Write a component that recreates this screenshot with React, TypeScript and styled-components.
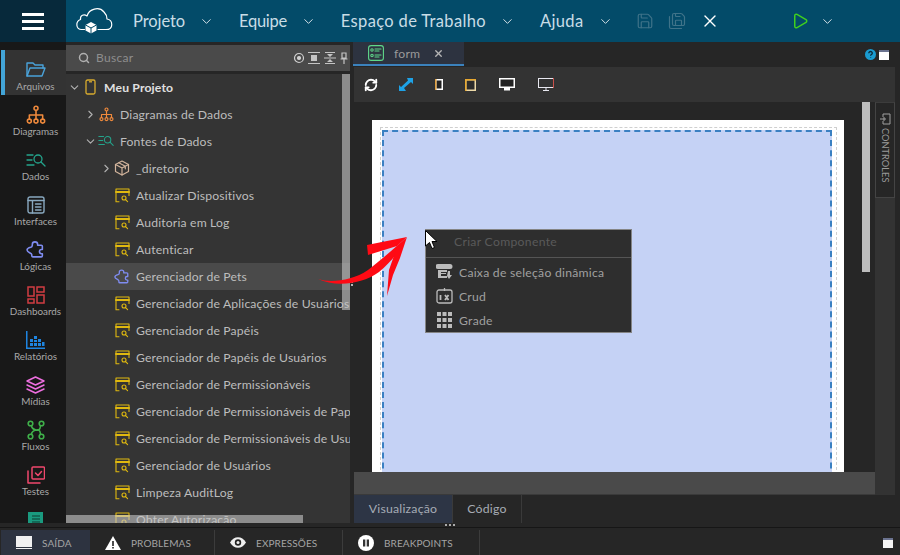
import React from 'react'
import styled, { createGlobalStyle } from 'styled-components'
import { ChevronDown, ChevronRight, Search, Save, SaveAll, X, Play, RefreshCw } from 'lucide-react'

const Global = createGlobalStyle`
  html, body { margin: 0; padding: 0; background: #262626; }
  * { box-sizing: border-box; }
  body { font-family: "Lato", "Liberation Sans", sans-serif; }
`

const Shell = styled.div`
  position: relative;
  width: 900px;
  height: 555px;
  display: flex;
  flex-direction: column;
  overflow: hidden;
  background: #262626;
`

/* header */
const Header = styled.header`
  height: 42px;
  flex: none;
  display: flex;
  align-items: center;
  background: #034b69;
  color: #c9dde6;
`
const BurgerBox = styled.div`
  width: 66px;
  height: 42px;
  background: #07293b;
  display: flex;
  flex-direction: column;
  align-items: center;
  justify-content: center;
  gap: 4px;
  span {
    display: block;
    width: 22px;
    height: 3px;
    background: #fff;
  }
`
const Logo = styled.svg`
  margin-left: 9px;
  width: 38px;
  height: 30px;
  flex: none;
`
const NavList = styled.nav`
  display: flex;
  align-items: center;
  margin-left: 20px;
  gap: 25px;
`
const NavItem = styled.div<{ $track: number }>`
  display: flex;
  align-items: center;
  gap: 14px;
  font-size: 16.5px;
  letter-spacing: ${p => p.$track}px;
`
const HeaderTools = styled.div`
  display: flex;
  align-items: center;
  margin-left: 23px;
  gap: 14px;
  color: #3f7389;
`
const CloseTool = styled.span`
  display: flex;
  color: #fff;
`
const RunTools = styled.div`
  display: flex;
  align-items: center;
  margin-left: 71px;
  gap: 11px;
  color: #3fcf1f;
`

/* body */
const Workspace = styled.div`
  height: 481px;
  flex: none;
  display: flex;
`
const Sidebar = styled.aside`
  width: 66px;
  flex: none;
  background: #181818;
  padding-top: 8px;
  overflow: hidden;
`
const SideItem = styled.div<{ $active?: boolean }>`
  height: 45px;
  margin-left: 1px;
  display: flex;
  flex-direction: column;
  align-items: center;
  padding-top: 9px;
  font-size: 9.9px;
  color: #a8a8a8;
  background: ${p => (p.$active ? '#333' : 'transparent')};
  border-left: 4px solid ${p => (p.$active ? '#43a5d8' : 'transparent')};
`
const SideIconSlot = styled.span`
  height: 21px;
  flex: none;
  display: flex;
  align-items: center;
  justify-content: center;
`
const FilesPanel = styled.section`
  position: relative;
  width: 284px;
  flex: none;
  display: flex;
  flex-direction: column;
  background: #262626;
  overflow: hidden;
`
const SearchBar = styled.div`
  margin-top: 3px;
  height: 26px;
  flex: none;
  display: flex;
  align-items: center;
  padding: 0 1px 1px 12px;
  background: #4a4a4a;
  color: #8e8e8e;
  font-size: 12px;
  letter-spacing: 0.3px;
  gap: 6px;
`
const SearchLabel = styled.span`
  flex: 1;
`
const PanelTools = styled.div`
  display: flex;
  align-items: center;
  gap: 3.5px;
  svg { display: block; }
`
const Tree = styled.div`
  margin-top: 3px;
  flex: 1;
  background: #343434;
  overflow: hidden;
`
const Row = styled.div<{ $level: number; $selected?: boolean; $strong?: boolean }>`
  height: 27px;
  display: flex;
  align-items: center;
  white-space: nowrap;
  padding-left: ${p => p.$level * 16}px;
  padding-bottom: 1px;
  font-size: 12.2px;
  letter-spacing: 0.16px;
  color: ${p => (p.$strong ? '#e0e0e0' : '#bdbdbd')};
  font-weight: ${p => (p.$strong ? 700 : 400)};
  background: ${p => (p.$selected ? '#4a4a4a' : 'transparent')};
`
const Caret = styled.span`
  width: 16px;
  flex: none;
  display: flex;
  justify-content: center;
  color: #b0b0b0;
`
const RowIcon = styled.span`
  width: 16px;
  flex: none;
  margin-right: 6px;
  display: flex;
  justify-content: center;
`
const VScroll = styled.div`
  position: absolute;
  right: 0;
  top: 32px;
  width: 8px;
  height: 236px;
  background: rgba(200, 200, 200, 0.6);
`
const HScroll = styled.div`
  position: absolute;
  left: 0;
  bottom: 0;
  width: 237px;
  height: 8px;
  background: rgba(200, 200, 200, 0.6);
`
const Gutter = styled.div`
  width: 3px;
  flex: none;
  display: flex;
  flex-direction: column;
  align-items: center;
  justify-content: center;
  gap: 1px;
  span {
    width: 2px;
    height: 1.5px;
    background: #b5b5b5;
  }
`

/* main */
const Main = styled.main`
  flex: 1;
  display: flex;
  flex-direction: column;
  min-width: 0;
`
const TabStrip = styled.div`
  height: 25px;
  flex: none;
  display: flex;
  align-items: flex-start;
  justify-content: space-between;
  padding-right: 11px;
`
const FormTab = styled.div`
  width: 111px;
  height: 24px;
  display: flex;
  align-items: center;
  padding-left: 15px;
  background: #2d3340;
  border-bottom: 2px solid #3b82bd;
  color: #9a9a9a;
  font-size: 12.2px;
  letter-spacing: 0.2px;
`
const TabTitle = styled.span`
  margin-left: 10px;
  flex: none;
  width: 33px;
`
const TabClose = styled.span`
  margin-left: 6px;
  display: flex;
  color: #b5b5b5;
`
const WindowTools = styled.div`
  display: flex;
  align-items: center;
  gap: 3px;
  padding-top: 7px;
`
const Toolbar = styled.div`
  height: 35px;
  flex: none;
  margin-left: 1px;
  margin-right: 5px;
  background: #333;
  display: flex;
  align-items: center;
`
const ToolButton = styled.span<{ $w: number }>`
  width: ${p => p.$w}px;
  flex: none;
  display: flex;
  justify-content: center;
`
const Stage = styled.div`
  height: 393px;
  flex: none;
  display: flex;
  margin-right: 5px;
`
const StageLeft = styled.div`
  flex: 1;
  display: flex;
  flex-direction: column;
  min-width: 0;
`
const Canvas = styled.div`
  position: relative;
  height: 370px;
  flex: none;
  padding: 18px 0 0 19px;
  overflow: hidden;
  background: #262626;
`
const CanvasScroll = styled.div`
  position: absolute;
  right: 5px;
  top: 0;
  width: 8px;
  height: 170px;
  background: #bdbdbd;
`
const Page = styled.div`
  position: relative;
  width: 472px;
  height: 420px;
  background: #fff;
  padding: 7px 7px 0 8px;
`
const GuideOuter = styled.div`
  height: 100%;
  border: 1px dashed #cfcfcf;
  padding: 2px 4px 0 1px;
`
const GuideInner = styled.div`
  height: 100%;
  border: 2px dashed #3a80c2;
  background: #c5d2f5;
`
const ContextMenu = styled.div`
  position: absolute;
  left: 53px;
  top: 109px;
  width: 207px;
  height: 104px;
  background: #2e2e2e;
  border: 1px solid #858585;
`
const MenuTitle = styled.div`
  height: 28px;
  display: flex;
  align-items: center;
  padding: 0 0 5px 28px;
  color: #5a5a5a;
  font-size: 12.2px;
  letter-spacing: 0.3px;
  border-bottom: 1px solid #555;
`
const MenuList = styled.div`
  padding-top: 2px;
`
const MenuRow = styled.div`
  height: 24px;
  display: flex;
  align-items: center;
  gap: 6px;
  padding-left: 10px;
  color: #a0a0a0;
  font-size: 12.2px;
  letter-spacing: 0.25px;
`
const BottomFiller = styled.div`
  height: 23px;
  flex: none;
  background: #4a4a4a;
  border-bottom: 1px solid #3a3a3a;
  margin-left: 1px;
`
const ControlsColumn = styled.div`
  width: 20px;
  flex: none;
  background: #333;
`
const ControlsTab = styled.div`
  height: 96px;
  border: 1px solid #444;
  border-top-color: #3c3c3c;
  background: #262626;
  display: flex;
  flex-direction: column;
  align-items: center;
  padding-top: 10px;
  gap: 3px;
  color: #9a9a9a;
`
const ControlsLabel = styled.span`
  writing-mode: vertical-rl;
  font-size: 9.3px;
  letter-spacing: 0;
`
const ViewTabs = styled.div`
  height: 28px;
  flex: none;
  display: flex;
  margin-left: 1px;
`
const ViewTab = styled.div<{ $active?: boolean; $w: number }>`
  width: ${p => p.$w}px;
  height: 28px;
  padding-bottom: 1px;
  display: flex;
  align-items: center;
  justify-content: center;
  font-size: 12.3px;
  letter-spacing: 0.2px;
  color: #a6acb5;
  background: ${p => (p.$active ? '#2d3545' : 'transparent')};
  border-right: 1px solid #3a3a3a;
`

/* footer */
const Splitter = styled.div`
  height: 5px;
  flex: none;
  display: flex;
  align-items: flex-start;
  justify-content: center;
  padding-top: 1px;
  border-bottom: 1px solid #161616;
`
const SplitterDots = styled.div`
  display: flex;
  gap: 2px;
  span {
    width: 2px;
    height: 2px;
    background: #aaa;
  }
`
const Footer = styled.footer`
  flex: 1;
  display: flex;
  align-items: flex-end;
  padding: 2px 7px 0 1px;
  background: #262626;
`
const FootTab = styled.div<{ $active?: boolean; $w: number }>`
  width: ${p => p.$w}px;
  height: 25px;
  flex: none;
  display: flex;
  align-items: center;
  gap: 10px;
  padding-left: 15px;
  font-size: 10px;
  letter-spacing: 0.1px;
  color: #a4a4a4;
  background: ${p => (p.$active ? '#2d3340' : 'transparent')};
  border-right: ${p => (p.$active ? 'none' : '1px solid #3c3c3c')};
`
const FootEnd = styled.div`
  margin-left: auto;
  align-self: center;
  display: flex;
`

/* overlay */
const ArrowOverlay = styled.svg`
  position: absolute;
  left: 310px;
  top: 230px;
  width: 105px;
  height: 70px;
  pointer-events: none;
`
const CursorOverlay = styled.svg`
  position: absolute;
  left: 425px;
  top: 230px;
  width: 13px;
  height: 20px;
`

const line = { fill: 'none', strokeLinecap: 'round', strokeLinejoin: 'round' } as const

const GridTableIcon = () => (
  <svg width="15" height="15" viewBox="0 0 15 15" {...line} stroke="#e0b90f" strokeWidth="1.100">
    <path d="M4 13.800H1V1h13v6.500" />
    <path d="M1 4h13" strokeWidth="2" />
    <circle cx="9" cy="10" r="2" />
    <path d="M10.600 11.600 12.600 13.600" />
  </svg>
)
const PuzzleIcon = ({ size = 17, color = '#7f8cf0' }: { size?: number; color?: string }) => (
  <svg width={size} height={size} viewBox="0 0 18 18" {...line} stroke={color} strokeWidth="1.500">
    <path d="M6 5V4c0-3 5-3 5 0v1h3.500a1 1 0 0 1 1 1v3h-.8c-2.600 0-2.600 4 0 4h.8v2a1 1 0 0 1-1 1H6.500a1 1 0 0 1-1-.8V14c0-2-4.500-2-4.500-4.500S5.500 7 5.500 6.500Z" />
  </svg>
)
const DiagramIcon = ({ size = 18 }: { size?: number }) => (
  <svg width={size} height={size} viewBox="0 0 18 18" {...line} stroke="#f08a3c" strokeWidth="1.400">
    <circle cx="9" cy="3" r="1.800" />
    <circle cx="3" cy="14.500" r="1.800" />
    <circle cx="9" cy="14.500" r="1.800" />
    <circle cx="15" cy="14.500" r="1.800" />
    <path d="M9 5v7.500M3 12.500V9h12v3.500" />
  </svg>
)
const DataIcon = ({ size = 20 }: { size?: number }) => (
  <svg width={size} height={size * 0.7} viewBox="0 0 20 14" {...line} stroke="#24a48c" strokeWidth="1.300">
    <path d="M1 2h6M1 7h5M1 12h7" />
    <circle cx="12" cy="6" r="4" />
    <path d="M15 9l4 4" />
  </svg>
)
const FolderIcon = () => (
  <svg width="20" height="18" viewBox="0 0 20 18" {...line} stroke="#4aa3da" strokeWidth="1.400">
    <path d="M1 15V2h6l2 2h8v3" />
    <path d="M1 15 4 7h15l-3 8Z" />
  </svg>
)
const InterfaceIcon = () => (
  <svg width="18" height="18" viewBox="0 0 18 18" {...line} stroke="#88a8bf" strokeWidth="1.400">
    <rect x="1" y="1" width="16" height="16" rx="2" />
    <path d="M1 4.500h16M5.500 4.500V17M8.500 8h5.500M8.500 11h5.500M8.500 14h5.500" />
  </svg>
)
const DashIcon = () => (
  <svg width="18" height="18" viewBox="0 0 18 18" fill="none" stroke="#d13c42" strokeWidth="1.500">
    <rect x="1" y="1" width="6" height="9" />
    <rect x="10" y="1" width="7" height="5" />
    <rect x="1" y="13" width="6" height="4" />
    <rect x="10" y="9" width="7" height="8" />
  </svg>
)
const ReportIcon = () => (
  <svg width="19" height="18" viewBox="0 0 19 18" fill="#1e84e0">
    <path d="M0 0h1.500v16.500H19V18H0Z" />
    <path d="M4 8h3v3H4ZM4 12h3v3H4ZM8 5h3v3H8ZM8 9h3v2H8ZM8 12h3v3H8ZM12 8h3v3h-3ZM12 12h3v3h-3ZM16 11h2.500v4H16Z" />
  </svg>
)
const MediaIcon = () => (
  <svg width="19" height="18" viewBox="0 0 19 18" {...line} stroke="#ee6fe0" strokeWidth="1.500">
    <path d="M9.500 1 18 5l-8.500 4L1 5Z" />
    <path d="m1 9 8.500 4L18 9" />
    <path d="m1 13 8.500 4 8.500-4" />
  </svg>
)
const FlowIcon = () => (
  <svg width="18" height="20" viewBox="0 0 18 20" {...line} stroke="#3fb04a" strokeWidth="1.600">
    <circle cx="3.500" cy="3.500" r="2.300" />
    <circle cx="14.500" cy="3.500" r="2.300" />
    <circle cx="3.500" cy="16.500" r="2.300" />
    <circle cx="14.500" cy="16.500" r="2.300" />
    <path d="M4.500 6C5 9 7 9.500 9 10s4 1 4.500-4M4.500 14C5 11 7 10.500 9 10s4-1 4.500 4" />
  </svg>
)
const TestIcon = () => (
  <svg width="18" height="18" viewBox="0 0 18 18" {...line} stroke="#f0476c" strokeWidth="1.500">
    <rect x="5" y="1" width="12.500" height="12" rx="1" />
    <path d="M1 5v12h12" />
    <path d="m8.500 7 2.500 2.500 3.500-4" />
  </svg>
)
const LastIcon = () => (
  <svg width="17" height="18" viewBox="0 0 17 18" fill="#1a9a7f">
    <path d="M1 1h15v16H1Z" />
    <path d="M5 5h8M5 8h8M5 11h8" stroke="#0d3a30" strokeWidth="1.200" />
  </svg>
)

type Side = { label: string; icon: React.ReactNode; active?: boolean }
const sideItems: Side[] = [
  { label: 'Arquivos', icon: <FolderIcon />, active: true },
  { label: 'Diagramas', icon: <DiagramIcon size={20} /> },
  { label: 'Dados', icon: <DataIcon /> },
  { label: 'Interfaces', icon: <InterfaceIcon /> },
  { label: 'Lógicas', icon: <PuzzleIcon size={19} /> },
  { label: 'Dashboards', icon: <DashIcon /> },
  { label: 'Relatórios', icon: <ReportIcon /> },
  { label: 'Mídias', icon: <MediaIcon /> },
  { label: 'Fluxos', icon: <FlowIcon /> },
  { label: 'Testes', icon: <TestIcon /> },
  { label: '', icon: <LastIcon /> },
]

const navItems = [
  { label: 'Projeto', track: -0.08 },
  { label: 'Equipe', track: -0.3 },
  { label: 'Espaço de Trabalho', track: 0.35 },
  { label: 'Ajuda', track: 0.35 },
]

const sources = [
  'Atualizar Dispositivos',
  'Auditoria em Log',
  'Autenticar',
  'Gerenciador de Pets',
  'Gerenciador de Aplicações de Usuários',
  'Gerenciador de Papéis',
  'Gerenciador de Papéis de Usuários',
  'Gerenciador de Permissionáveis',
  'Gerenciador de Permissionáveis de Papéis',
  'Gerenciador de Permissionáveis de Usuários',
  'Gerenciador de Usuários',
  'Limpeza AuditLog',
  'Obter Autorização',
]

const App = () => {
  return (
    <Shell>
      <Global />
      <Header>
        <BurgerBox>
          <span />
          <span />
          <span />
        </BurgerBox>
        <Logo viewBox="0 0 38 30" {...line} stroke="#fff" strokeWidth="1.200">
          <path d="M9.500 23.500H6.500C1 23.500 0 15.500 5.500 13.500 5 9 9 8 12 10 14 3 24 0 29 6c2.500 2.500 3 5 3 7 6 1 7 10.500-1 10.500h-8" />
          <path d="M16 16l5.500 3v5.500L16 27.500l-5.500-3V19Z" fill="#fff" stroke="none" />
          <path d="M10.500 19 16 22l5.500-3M16 22v5.500" stroke="#034b69" strokeWidth="1" />
        </Logo>
        <NavList>
          {navItems.map(item => (
            <NavItem key={item.label} $track={item.track}>
              {item.label}
              <ChevronDown size={15} strokeWidth={1.500} color="#dfe9ee" />
            </NavItem>
          ))}
        </NavList>
        <HeaderTools>
          <Save size={18} strokeWidth={1.600} />
          <SaveAll size={18} strokeWidth={1.600} />
          <CloseTool>
            <X size={20} strokeWidth={1.600} />
          </CloseTool>
        </HeaderTools>
        <RunTools>
          <Play size={18} strokeWidth={2} />
          <ChevronDown size={15} strokeWidth={1.500} color="#dfe9ee" />
        </RunTools>
      </Header>

      <Workspace>
        <Sidebar>
          {sideItems.map(item => (
            <SideItem key={item.label} $active={item.active}>
              <SideIconSlot>{item.icon}</SideIconSlot>
              {item.label}
            </SideItem>
          ))}
        </Sidebar>

        <FilesPanel>
          <SearchBar>
            <Search size={12} strokeWidth={3} color="#b0b0b0" />
            <SearchLabel>Buscar</SearchLabel>
            <PanelTools>
              <svg width="12" height="12" viewBox="0 0 12 12" fill="none" stroke="#d0d0d0" strokeWidth="1.200">
                <circle cx="6" cy="6" r="4.500" />
                <circle cx="6" cy="6" r="1.500" fill="#d0d0d0" />
              </svg>
              <svg width="12" height="12" viewBox="0 0 12 12" fill="#c4c4c4">
                <path d="M0 0h12v1H0ZM0 11h12v1H0ZM3 3h6v6H3Z" />
              </svg>
              <svg width="12" height="12" viewBox="0 0 12 12" fill="#c4c4c4">
                <path d="M1 0h10v1H1ZM0 5.500h12v1H0ZM1 11h10v1H1ZM3 2h6L6 5ZM3 10h6L6 7Z" />
              </svg>
              <svg width="10" height="12" viewBox="0 0 10 12" fill="none" stroke="#c4c4c4" strokeWidth="1.200">
                <path d="M3 1h4v5H3ZM1.500 7h7M5 7v5" />
              </svg>
            </PanelTools>
          </SearchBar>
          <Tree>
            <Row $level={0} $strong>
              <Caret>
                <ChevronDown size={13} strokeWidth={2} />
              </Caret>
              <RowIcon>
                <svg width="11" height="16" viewBox="0 0 11 16" fill="none" stroke="#d8ab2e" strokeWidth="1.300">
                  <rect x="1" y="1" width="9" height="14" rx="1.500" />
                  <path d="M4 2.800h3" />
                </svg>
              </RowIcon>
              Meu Projeto
            </Row>
            <Row $level={1}>
              <Caret>
                <ChevronRight size={13} strokeWidth={2} />
              </Caret>
              <RowIcon>
                <DiagramIcon size={15} />
              </RowIcon>
              Diagramas de Dados
            </Row>
            <Row $level={1}>
              <Caret>
                <ChevronDown size={13} strokeWidth={2} />
              </Caret>
              <RowIcon>
                <DataIcon size={16} />
              </RowIcon>
              Fontes de Dados
            </Row>
            <Row $level={2}>
              <Caret>
                <ChevronRight size={13} strokeWidth={2} />
              </Caret>
              <RowIcon>
                <svg width="16" height="16" viewBox="0 0 16 16" {...line} stroke="#d2b49c" strokeWidth="1.200">
                  <path d="M8 1l6.500 3.500v7L8 15l-6.500-3.500v-7Z" />
                  <path d="M1.500 4.500 8 8l6.500-3.500M8 8v7M4.800 2.800l6.500 3.500v2.500" />
                </svg>
              </RowIcon>
              _diretorio
            </Row>
            {sources.map(name => {
              const pets = name === 'Gerenciador de Pets'
              return (
                <Row key={name} $level={2} $selected={pets}>
                  <Caret />
                  <RowIcon>{pets ? <PuzzleIcon /> : <GridTableIcon />}</RowIcon>
                  {name}
                </Row>
              )
            })}
          </Tree>
          <VScroll />
          <HScroll />
        </FilesPanel>

        <Gutter>
          <span />
          <span />
          <span />
        </Gutter>

        <Main>
          <TabStrip>
            <FormTab>
              <svg width="16" height="16" viewBox="0 0 16 16" {...line} stroke="#5fd98a" strokeWidth="1.100">
                <rect x="0.600" y="0.600" width="14.800" height="14.800" rx="2.500" />
                <circle cx="4" cy="5" r="1.200" />
                <circle cx="4" cy="10.500" r="1.200" />
                <path d="M7 4h6M7 6h4M7 10h6M7 12h4" />
              </svg>
              <TabTitle>form</TabTitle>
              <TabClose>
                <X size={11} strokeWidth={3} />
              </TabClose>
            </FormTab>
            <WindowTools>
              <svg width="11" height="11" viewBox="0 0 11 11">
                <circle cx="5.500" cy="5.500" r="5.500" fill="#1a9bd0" />
                <path d="M3.800 4.200c0-2.300 3.500-2.300 3.500 0 0 1.300-1.700 1.300-1.700 2.500M5.600 8.300v.5" fill="none" stroke="#0b2a3a" strokeWidth="1.300" />
              </svg>
              <svg width="10" height="10" viewBox="0 0 10 10">
                <rect width="10" height="10" fill="#fff" />
                <rect width="10" height="2" fill="#6b7390" />
              </svg>
            </WindowTools>
          </TabStrip>
          <Toolbar>
            <ToolButton $w={33}>
              <RefreshCw size={14} strokeWidth={3.200} color="#fff" />
            </ToolButton>
            <ToolButton $w={37}>
              <svg width="14" height="13" viewBox="0 0 14 13" fill="#1ea2e6">
                <path d="M8 0h6v6l-2-2-7 6 2 3H0V7l2 2 7-6.500Z" />
              </svg>
            </ToolButton>
            <ToolButton $w={29}>
              <svg width="8" height="11" viewBox="0 0 8 11">
                <rect x="0.750" y="0.750" width="6.500" height="9.500" fill="#222" stroke="#fff" strokeWidth="1.500" />
                <path d="M0 0h1.500v11H0Z" fill="#e0a040" />
              </svg>
            </ToolButton>
            <ToolButton $w={35}>
              <svg width="11" height="12" viewBox="0 0 11 12">
                <rect x="0.750" y="0.750" width="9.500" height="10.500" fill="#2b2b2b" stroke="#ecd9a8" strokeWidth="1.500" />
                <path d="M0 0h11v1.500H1.500V12H0Z" fill="#e8a830" />
              </svg>
            </ToolButton>
            <ToolButton $w={37}>
              <svg width="16" height="13" viewBox="0 0 16 13" fill="#fff">
                <path d="M0 0h16v10H0Z" />
                <path d="M1.500 1.500h13v7h-13Z" fill="#222" />
                <path d="M5 10h6v2.500H5Z" />
              </svg>
            </ToolButton>
            <ToolButton $w={41}>
              <svg width="16" height="13" viewBox="0 0 16 13" fill="none" stroke="#e8e8f0" strokeWidth="1">
                <rect x="0.500" y="0.500" width="15" height="9" />
                <path d="M8 10v2M5 12.500h6" />
                <path d="M15.500 0v10" stroke="#c9504a" />
              </svg>
            </ToolButton>
          </Toolbar>
          <Stage>
            <StageLeft>
              <Canvas>
                <Page>
                  <GuideOuter>
                    <GuideInner />
                  </GuideOuter>
                  <ContextMenu>
                    <MenuTitle>Criar Componente</MenuTitle>
                    <MenuList>
                      <MenuRow>
                        <svg width="17" height="16" viewBox="0 0 17 16" fill="#bcbcbc">
                          <path d="M2 0h12a2 2 0 0 1 0 5H2a2 2 0 0 1 0-5ZM2 6h9v2H5v1h5v1H5v2h6v2H2Z" />
                          <path d="M12 7h2v4h2l-3 4-2-3Z" />
                        </svg>
                        Caixa de seleção dinâmica
                      </MenuRow>
                      <MenuRow>
                        <svg width="17" height="16" viewBox="0 0 17 16" fill="none" stroke="#bcbcbc" strokeWidth="1.300">
                          <rect x="1" y="2" width="15" height="13" rx="2" />
                          <path d="M4.500 7v5M9 7l3.500 5M12.500 7 9 12" strokeWidth="1.800" />
                          <path d="M8.500 0v3" />
                        </svg>
                        Crud
                      </MenuRow>
                      <MenuRow>
                        <svg width="17" height="16" viewBox="0 0 17 16" fill="#bcbcbc">
                          <path d="M1 0h4v4H1ZM6.500 0h4v4h-4ZM12 0h4v4h-4ZM1 6h4v4H1ZM6.500 6h4v4h-4ZM12 6h4v4h-4ZM1 12h4v4H1ZM6.500 12h4v4h-4ZM12 12h4v4h-4Z" />
                        </svg>
                        Grade
                      </MenuRow>
                    </MenuList>
                  </ContextMenu>
                </Page>
                <CanvasScroll />
              </Canvas>
              <BottomFiller />
            </StageLeft>
            <ControlsColumn>
              <ControlsTab>
                <svg width="12" height="12" viewBox="0 0 12 12" fill="none" stroke="#a0a0a0" strokeWidth="1">
                  <path d="M4 1h7v10H4V8M4 4V1" />
                  <path d="M1 6h6M5 4v4" />
                </svg>
                <ControlsLabel>CONTROLES</ControlsLabel>
              </ControlsTab>
            </ControlsColumn>
          </Stage>
          <ViewTabs>
            <ViewTab $active $w={99}>
              Visualização
            </ViewTab>
            <ViewTab $w={69}>Código</ViewTab>
          </ViewTabs>
        </Main>
      </Workspace>

      <Splitter>
        <SplitterDots>
          <span />
          <span />
          <span />
        </SplitterDots>
      </Splitter>

      <Footer>
        <FootTab $active $w={89}>
          <svg width="16" height="14" viewBox="0 0 16 14" fill="#f0f0f0">
            <path d="M0 0h16v11H0ZM0 12h16v1H0Z" />
          </svg>
          SAÍDA
        </FootTab>
        <FootTab $w={125}>
          <svg width="16" height="14" viewBox="0 0 16 14">
            <path d="M8 0 16 14H0Z" fill="#fff" />
            <path d="M7.200 5h1.600v5H7.200ZM7.200 11h1.600v1.500H7.200Z" fill="#222" />
          </svg>
          PROBLEMAS
        </FootTab>
        <FootTab $w={128}>
          <svg width="16" height="11" viewBox="0 0 16 11">
            <path d="M0 5.500C4-1.500 12-1.500 16 5.500 12 12.500 4 12.500 0 5.500Z" fill="#eee" />
            <circle cx="8" cy="5.500" r="3.200" fill="#222" />
            <circle cx="8" cy="5.500" r="1.500" fill="#eee" />
          </svg>
          EXPRESSÕES
        </FootTab>
        <FootTab $w={137}>
          <svg width="16" height="16" viewBox="0 0 16 16">
            <circle cx="8" cy="8" r="8" fill="#fff" />
            <path d="M5 4.500h2.300v7H5ZM8.700 4.500H11v7H8.700Z" fill="#333" />
          </svg>
          BREAKPOINTS
        </FootTab>
        <FootEnd>
          <svg width="10" height="10" viewBox="0 0 10 10">
            <rect width="10" height="10" fill="#f4f4f4" />
            <rect width="10" height="2" fill="#6b7390" />
          </svg>
        </FootEnd>
      </Footer>

      <ArrowOverlay viewBox="310 230 105 70" fill="#ff0a14">
        <path d="M318 279c12 4 34 2 50-9 12-9 24-20 38-32-6 13-16 25-27 34-18 13-44 15-61 7Z" />
        <path d="M367 245 407 237 397 246 368 255Z" />
        <path d="M407 237 400 258 393 275 387 296 389 270 396 250Z" />
      </ArrowOverlay>
      <CursorOverlay viewBox="0 0 13 20">
        <path d="M0.500 0.500V16l4-3.500 2.500 6 2.500-1-2.500-6H12Z" fill="#fff" stroke="#000" strokeWidth="1" />
      </CursorOverlay>
    </Shell>
  )
}

export default App
